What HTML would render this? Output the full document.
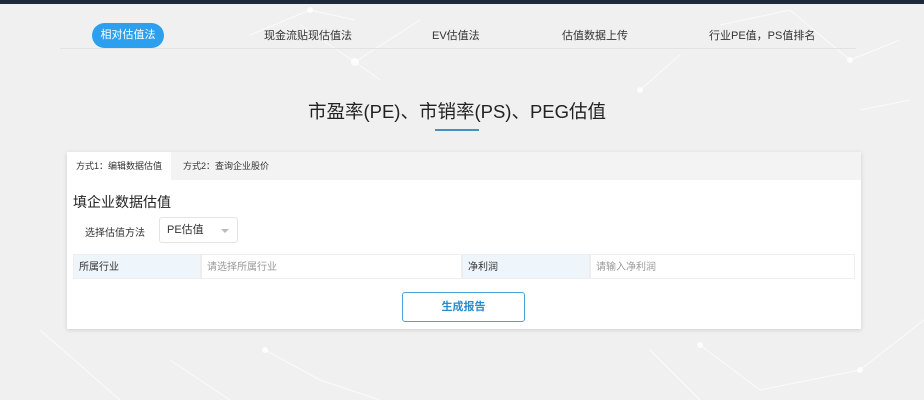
<!DOCTYPE html>
<html><head><meta charset="utf-8"><style>
*{margin:0;padding:0;box-sizing:border-box}
body{width:924px;height:400px;overflow:hidden;background:#f0f0f0;font-family:"Liberation Sans","Noto Sans CJK SC",sans-serif;color:#333;position:relative}
.abs{position:absolute}
.top{left:0;top:0;width:924px;height:4px;background:#1c2a3c}
.nav{left:60px;top:48px;width:796px;height:1px;background:#e2e2e2}
.ni{top:27px;font-size:11px;color:#333;white-space:nowrap}
.pill{left:92px;top:23px;width:72px;height:25px;border-radius:13px;background:#2ca0ef;color:#fff;font-size:11px;text-align:center;line-height:25px}
.title{left:0;width:914px;top:98px;text-align:center;font-size:18.5px;color:#222}
.ul{left:435px;top:129px;width:44px;height:2px;background:#4a8fbf}
.card{left:67px;top:152px;width:794px;height:177px;background:#fff;box-shadow:0 1px 4px rgba(0,0,0,.15)}
.tabs{left:0;top:0;width:794px;height:28px;background:#f3f3f3}
.tab{top:0;height:28px;line-height:28px;font-size:9px;padding:0 9px}
.cell{top:102px;height:25px;line-height:25px;font-size:10px;border:1px solid #eee}
</style></head><body>
<svg class="abs" style="left:0;top:0" width="924" height="400">
<g stroke="#fff" stroke-width="1" fill="none" opacity=".7">
<line x1="250" y1="35" x2="310" y2="10"/><line x1="310" y1="10" x2="355" y2="20"/><line x1="300" y1="25" x2="355" y2="62"/><line x1="355" y1="62" x2="420" y2="20"/><line x1="355" y1="62" x2="380" y2="80"/>
<line x1="640" y1="90" x2="680" y2="55"/><line x1="720" y1="25" x2="790" y2="10"/><line x1="790" y1="10" x2="850" y2="60"/><line x1="850" y1="60" x2="900" y2="40"/><line x1="860" y1="110" x2="910" y2="100"/>
<line x1="40" y1="330" x2="120" y2="400"/><line x1="170" y1="360" x2="230" y2="400"/><line x1="265" y1="350" x2="320" y2="380"/><line x1="320" y1="380" x2="380" y2="400"/>
<line x1="650" y1="350" x2="700" y2="400"/><line x1="700" y1="345" x2="760" y2="390"/><line x1="760" y1="390" x2="860" y2="370"/><line x1="860" y1="370" x2="924" y2="320"/>
</g>
<g fill="#fff" opacity=".8"><circle cx="355" cy="62" r="4"/><circle cx="310" cy="10" r="3"/><circle cx="850" cy="60" r="3"/><circle cx="265" cy="350" r="3"/><circle cx="700" cy="345" r="3"/><circle cx="860" cy="370" r="3"/><circle cx="640" cy="90" r="3"/></g>
</svg>
<div class="abs top"></div>
<div class="abs nav"></div>
<div class="abs pill">相对估值法</div>
<div class="abs ni" style="left:264px">现金流贴现估值法</div>
<div class="abs ni" style="left:432px">EV估值法</div>
<div class="abs ni" style="left:562px">估值数据上传</div>
<div class="abs ni" style="left:709px">行业PE值，PS值排名</div>
<div class="abs title">市盈率(PE)、市销率(PS)、PEG估值</div>
<div class="abs ul"></div>
<div class="abs card">
 <div class="abs tabs"></div>
 <div class="abs tab" style="left:0;background:#fff">方式1：编辑数据估值</div>
 <div class="abs tab" style="left:107px">方式2：查询企业股价</div>
 <div class="abs" style="left:6px;top:40px;font-size:14px;color:#222">填企业数据估值</div>
 <div class="abs" style="left:18px;top:72px;font-size:10px">选择估值方法</div>
 <div class="abs" style="left:92px;top:65px;width:79px;height:26px;border:1px solid #e4e4e4;border-radius:3px;font-size:11px;line-height:24px;padding-left:7px">PE估值<span style="position:absolute;right:8px;top:11px;border:4px solid transparent;border-top:4px solid #bbb"></span></div>
 <div class="abs cell" style="left:6px;width:128px;background:#eef5fb;padding-left:5px">所属行业</div>
 <div class="abs cell" style="left:134px;width:261px;color:#999;padding-left:5px">请选择所属行业</div>
 <div class="abs cell" style="left:395px;width:128px;background:#eef5fb;padding-left:5px">净利润</div>
 <div class="abs cell" style="left:523px;width:265px;color:#999;padding-left:5px">请输入净利润</div>
 <div class="abs" style="left:335px;top:140px;width:123px;height:30px;border:1px solid #4aa3d8;border-radius:3px;color:#2a8cd0;font-size:11px;font-weight:bold;text-align:center;line-height:28px">生成报告</div>
</div>
</body></html>
